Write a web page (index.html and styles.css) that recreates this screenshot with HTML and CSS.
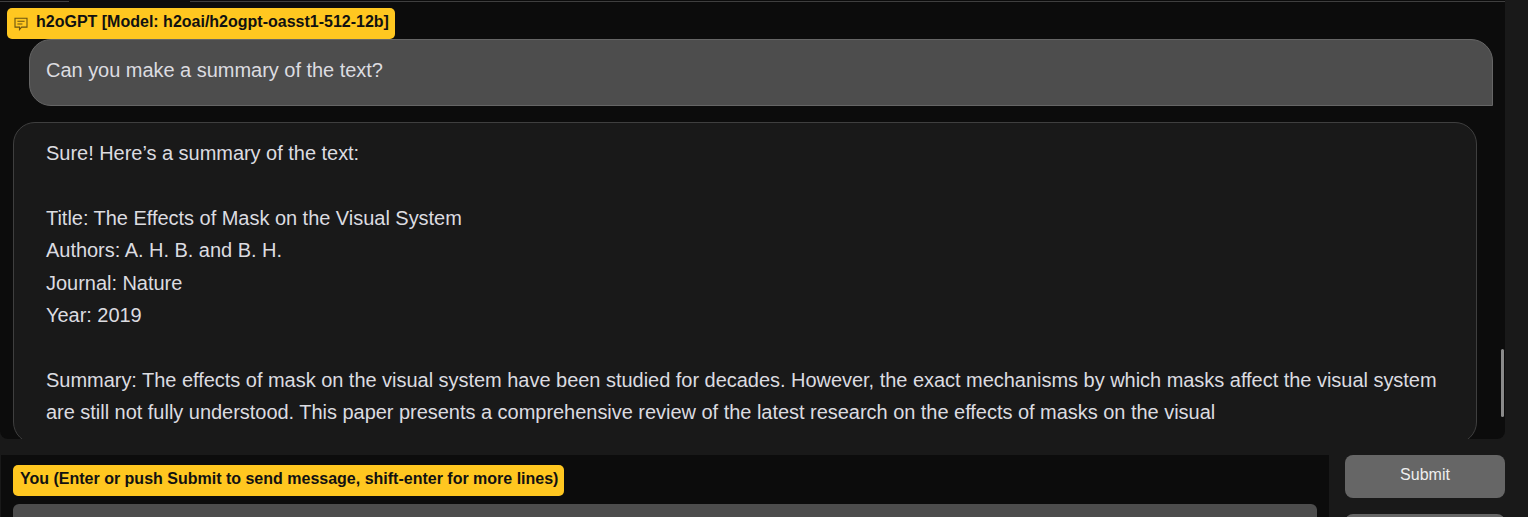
FILE: index.html
```html
<!DOCTYPE html>
<html lang="en">
<head>
  <meta charset="UTF-8" />
  <title>h2oGPT</title>
  <link rel="stylesheet" href="styles.css">
</head>
<body>

<div class="app">
  <section class="chat-panel">
    <div class="tab-line">
      <span class="tab-rule tab-rule-left"></span>
      <span class="tab-gap"></span>
      <span class="tab-rule tab-rule-right"></span>
    </div>

    <div class="chat-label">
      <svg class="chat-icon" viewBox="0 0 14 14" width="14" height="14" fill="none" stroke="currentColor" stroke-width="1.1">
        <path d="M1 1.2h12v8.9H7.6L5.5 12.6v-2.5H1z" />
        <path d="M3.4 4.2h7.2M3.4 7h5" />
      </svg>
      <span>h2oGPT [Model: h2oai/h2ogpt-oasst1-512-12b]</span>
    </div>

    <div class="messages">
      <div class="bubble bubble-user">Can you make a summary of the text?</div>
      <div class="bubble bubble-bot">
        <p>Sure! Here’s a summary of the text:</p>
        <p class="blank"></p>
        <p>Title: The Effects of Mask on the Visual System</p>
        <p>Authors: A. H. B. and B. H.</p>
        <p>Journal: Nature</p>
        <p>Year: 2019</p>
        <p class="blank"></p>
        <p>Summary: The effects of mask on the visual system have been studied for decades. However, the exact mechanisms by which masks affect the visual system are still not fully understood. This paper presents a comprehensive review of the latest research on the effects of masks on the visual</p>
      </div>
    </div>

    <div class="scroll-thumb"></div>
  </section>

  <div class="input-row">
    <div class="input-box">
      <div class="input-label">You (Enter or push Submit to send message, shift-enter for more lines)</div>
      <div class="input-field"></div>
    </div>
    <div class="actions">
      <button class="btn">Submit</button>
      <button class="btn"></button>
    </div>
  </div>
</div>

</body>
</html>
```

FILE: styles.css
```css
html, body {
  margin: 0;
  padding: 0;
  height: 517px;
  overflow: hidden;
  background: #191919;
  font-family: "Liberation Sans", Arial, sans-serif;
}
.app {
  width: 1505px;
  display: flex;
  flex-direction: column;
  gap: 16px;
}

.chat-panel {
  position: relative;
  height: 439px;
  overflow: hidden;
  background: #0c0c0c;
  border-radius: 0 0 8px 8px;
}
.tab-line {
  display: flex;
  height: 2px;
}
.tab-rule {
  height: 1px;
  margin-top: 1px;
  background: #3f3f3f;
}
.tab-rule-left { width: 69px; }
.tab-gap { width: 121px; }
.tab-rule-right { flex: 1; }

.chat-label {
  position: absolute;
  top: 8px;
  left: 7px;
  z-index: 2;
  display: flex;
  align-items: center;
  gap: 8px;
  height: 31px;
  padding: 0 6px 0 7px;
  box-sizing: border-box;
  border-radius: 5px;
  background: #ffc720;
  color: #111;
  font-size: 16px;
  font-weight: 700;
}
.chat-label span {
  margin-top: -3px;
}
.chat-icon {
  color: #6a5312;
}

.messages {
  display: flex;
  flex-direction: column;
  gap: 16px;
  padding-top: 37px;
}
.bubble {
  width: 1464px;
  box-sizing: border-box;
  border: 1px solid #666;
  border-radius: 22px;
  color: #dcdce0;
  font-size: 20px;
  letter-spacing: -0.03px;
  line-height: 32.4px;
}
.bubble-user {
  height: 67px;
  margin-left: 29px;
  padding: 14px 16px;
  background: #4d4d4d;
  border-bottom-right-radius: 0;
}
.bubble-bot {
  margin-left: 13px;
  padding: 14px 32px;
  background: #191919;
  border-color: #3f3f3f;
}
.bubble p {
  margin: 0;
}
.bubble .blank {
  height: 32.4px;
}

.scroll-thumb {
  position: absolute;
  top: 349px;
  right: 1px;
  width: 3px;
  height: 68px;
  border-radius: 2px;
  background: #8a8a8a;
}

.input-row {
  display: flex;
  gap: 16px;
  height: 62px;
  overflow: hidden;
  padding-left: 1px;
}
.input-box {
  flex: 1;
  display: flex;
  flex-direction: column;
  align-items: flex-start;
  gap: 8px;
  padding: 10px 12px 0;
  background: #0c0c0c;
}
.input-label {
  flex-shrink: 0;
  height: 31px;
  line-height: 27px;
  padding: 0 6px 0 7px;
  box-sizing: border-box;
  border-radius: 5px;
  background: #ffc720;
  color: #111;
  font-size: 16px;
  font-weight: 700;
}
.input-field {
  flex-shrink: 0;
  align-self: stretch;
  height: 40px;
  border-radius: 6px 6px 0 0;
  background: #4d4d4d;
}
.actions {
  width: 160px;
  display: flex;
  flex-direction: column;
  gap: 16px;
}
.btn {
  height: 43px;
  flex-shrink: 0;
  border: none;
  border-radius: 8px;
  padding: 0 0 4px;
  background: #666;
  color: #eee;
  font-family: inherit;
  font-size: 16px;
}
```
